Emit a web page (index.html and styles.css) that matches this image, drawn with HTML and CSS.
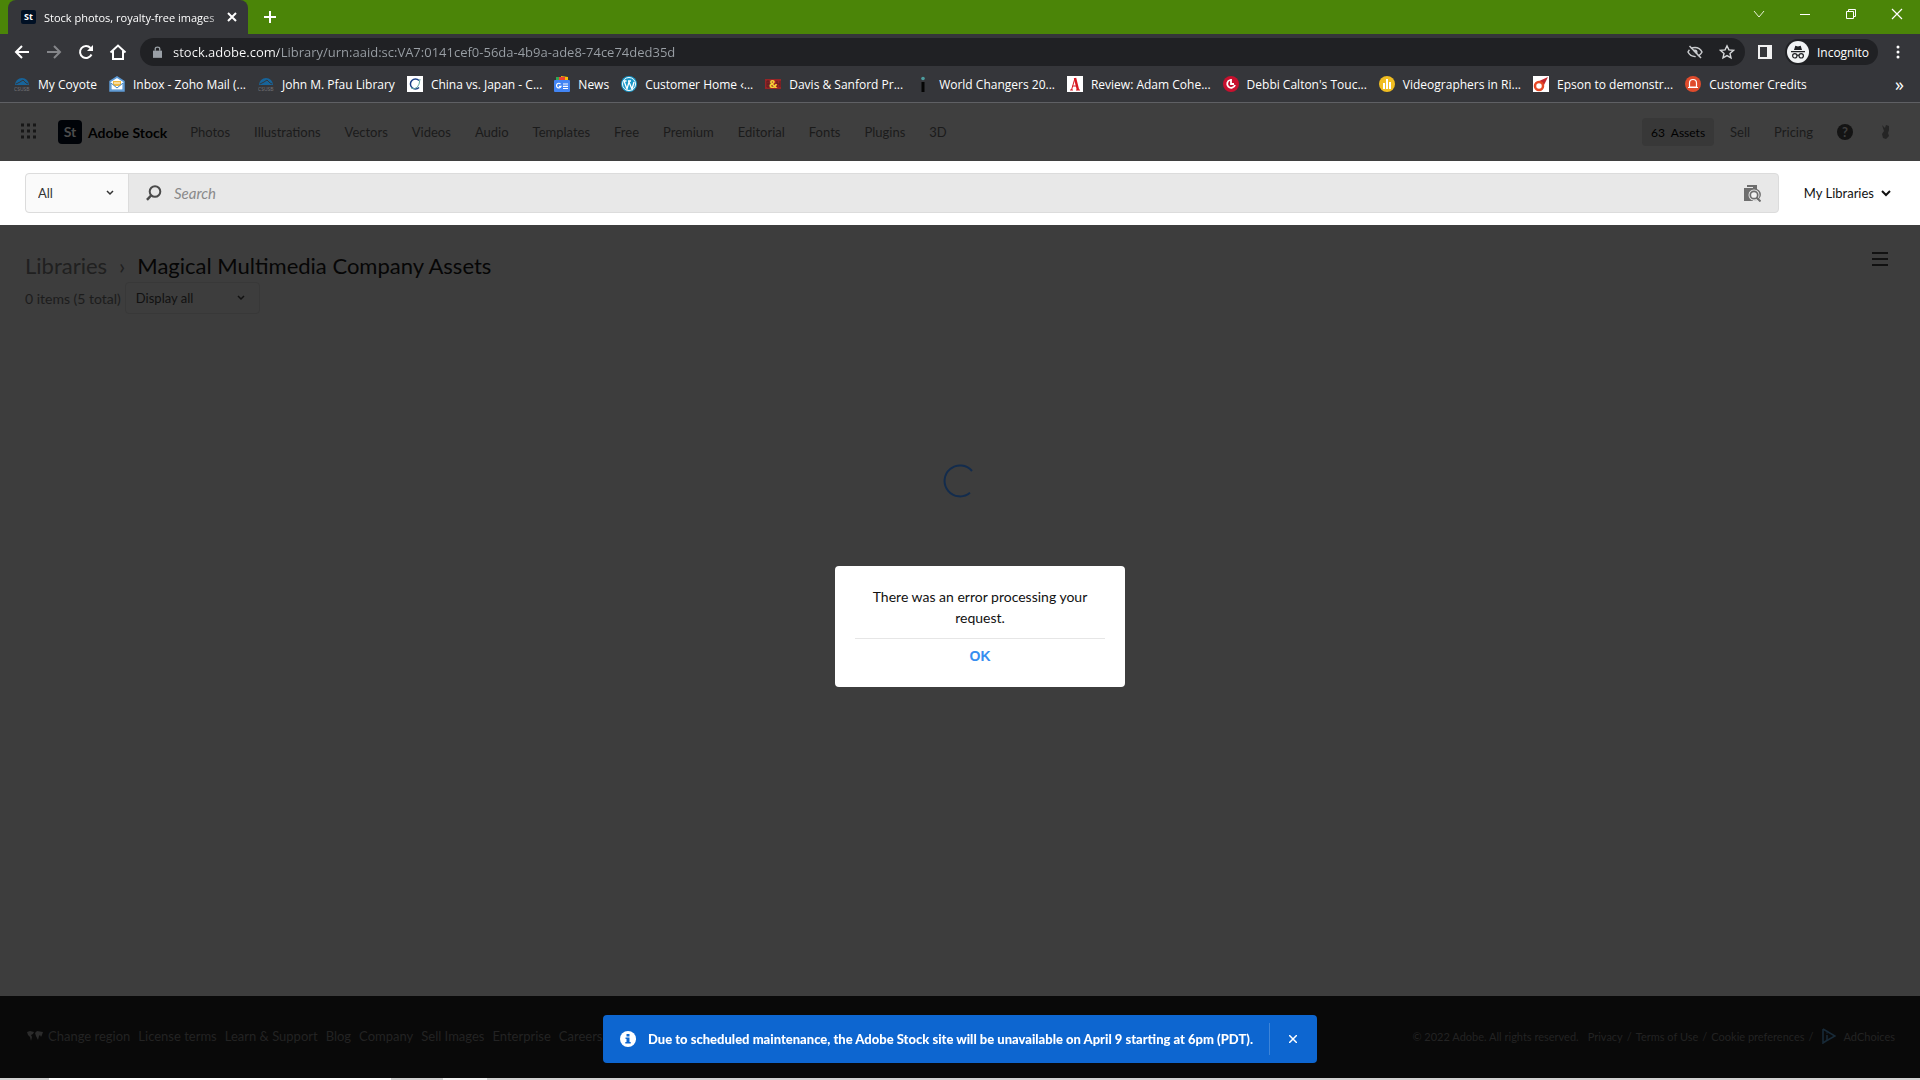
FILE: index.html
```html
<!DOCTYPE html>
<html lang="en">
<head>
  <meta charset="UTF-8">
  <title>Stock photos, royalty-free images</title>
  <link rel="stylesheet" href="styles.css">
</head>
<body>

<div class="browser">
  <div class="tab-strip">
    <div class="tab">
      <span class="favicon-st">St</span>
      <span class="tab-title">Stock photos, royalty-free images</span>
      <button class="tab-close" aria-label="Close tab">
        <svg width="10" height="10" viewBox="0 0 10 10"><path d="M1 1l8 8M9 1l-8 8" stroke="#fff" stroke-width="2"/></svg>
      </button>
    </div>
    <button class="new-tab" aria-label="New tab">
      <svg width="14" height="14" viewBox="0 0 14 14"><path d="M7 1v12M1 7h12" stroke="#fff" stroke-width="2"/></svg>
    </button>
    <div class="window-controls">
      <button aria-label="Search tabs"><svg width="12" height="12" viewBox="0 0 12 12"><path d="M1 3l5 6 5-6" fill="none" stroke="#e8f0d8"/></svg></button>
      <button aria-label="Minimize"><svg width="12" height="12" viewBox="0 0 12 12"><path d="M1 6.500h10" stroke="#fff"/></svg></button>
      <button aria-label="Restore"><svg width="12" height="12" viewBox="0 0 12 12"><path d="M1.500 3.500h7v7h-7zM3.500 3v-1.500h7v7h-2" fill="none" stroke="#fff"/></svg></button>
      <button aria-label="Close"><svg width="12" height="12" viewBox="0 0 12 12"><path d="M1 1l10 10M11 1L1 11" stroke="#fff" stroke-width="1.200"/></svg></button>
    </div>
  </div>

  <div class="toolbar">
    <button class="tool" aria-label="Back"><svg width="16" height="16" viewBox="0 0 16 16"><path d="M15 8H2M8 2L2 8l6 6" fill="none" stroke="#fff" stroke-width="2"/></svg></button>
    <button class="tool" aria-label="Forward"><svg width="16" height="16" viewBox="0 0 16 16"><path d="M1 8h13M8 2l6 6-6 6" fill="none" stroke="#85868a" stroke-width="2"/></svg></button>
    <button class="tool" aria-label="Reload"><svg width="16" height="16" viewBox="0 0 16 16"><path d="M13.500 10.500A6 6 0 1 1 12.500 4" fill="none" stroke="#fff" stroke-width="2"/><path d="M15 1v6H9z" fill="#fff"/></svg></button>
    <button class="tool" aria-label="Home"><svg width="18" height="16" viewBox="0 0 18 16"><path d="M1.500 8.500L9 1.500l7.500 7M4 7v8h10V7" fill="none" stroke="#fff" stroke-width="2"/></svg></button>
    <div class="address">
      <svg class="lock" width="9" height="12" viewBox="0 0 10 13"><path d="M0 5h10v8H0z" fill="#9aa0a6"/><path d="M2.500 5V3a2.500 2 0 0 1 5 0v2" fill="none" stroke="#9aa0a6" stroke-width="1.500"/></svg>
      <input class="url" type="text" aria-label="Address" value="stock.adobe.com/Library/urn:aaid:sc:VA7:0141cef0-56da-4b9a-ade8-74ce74ded35d">
      <button aria-label="Cookies blocked"><svg width="16" height="16" viewBox="0 0 16 16"><path d="M1 8c3-6 11-6 14 0-3 6-11 6-14 0z" fill="none" stroke="#c9cbce" stroke-width="1.500"/><circle cx="8" cy="8" r="2.500" fill="#c9cbce"/><path d="M1.500 3.200L12.500 15" stroke="#202124" stroke-width="2"/><path d="M2.500 2L14 14" stroke="#c9cbce" stroke-width="1.500"/></svg></button>
      <button aria-label="Bookmark this tab"><svg width="16" height="16" viewBox="0 0 16 16"><path d="M8 1.800l1.900 4.100 4.500.5-3.400 3 1 4.500L8 11.600l-4 2.300 1-4.500-3.400-3 4.500-.5z" fill="none" stroke="#d6d8da" stroke-width="1.400"/></svg></button>
    </div>
    <button class="side-panel" aria-label="Side panel"><svg width="14" height="14" viewBox="0 0 14 14"><path d="M1 1h12v12H1z" fill="none" stroke="#f1f1f1" stroke-width="2"/><path d="M9 0h5v14H9z" fill="#f1f1f1"/></svg></button>
    <button class="incognito">
      <svg width="22" height="22" viewBox="0 0 22 22"><circle cx="11" cy="11" r="11" fill="#f1f3f4"/><path d="M7 9l1.300-4.200 2.700.6 2.700-.6L15 9zM4 10h14v1.300H4z" fill="#202124"/><g fill="none" stroke="#202124" stroke-width="1.200"><circle cx="7.800" cy="14.800" r="2.200"/><circle cx="14.200" cy="14.800" r="2.200"/><path d="M10 14.500q1-.8 2 0"/></g></svg>
      Incognito
    </button>
    <button class="menu" aria-label="Browser menu"><svg width="4" height="16" viewBox="0 0 4 16"><g fill="#fff"><circle cx="2" cy="3" r="1.500"/><circle cx="2" cy="8" r="1.500"/><circle cx="2" cy="13" r="1.500"/></g></svg></button>
  </div>

  <nav class="bookmarks" aria-label="Bookmarks">
    <a href="#"><svg width="16" height="16" viewBox="0 0 16 16"><path d="M1 9a7 7 0 0 1 14 0z" fill="#17649a"/><path d="M2 8l4-2 3-2 3 3 2 1" fill="none" stroke="#35363a"/><text x="0" y="15" class="csusb">CSUSB</text></svg>My Coyote</a>
    <a href="#"><svg width="16" height="16" viewBox="0 0 16 16"><path d="M1 5.500L8 1l7 4.500V15H1z" fill="#fff" stroke="#5c9ad6" stroke-width="1.500"/><path d="M4 5h8v5H4z" fill="#f1b83f"/><path d="M2 7l6 5 6-5v7H2z" fill="#fff" stroke="#4285c5"/><path d="M5 7h6" stroke="#fff"/></svg>Inbox - Zoho Mail (...</a>
    <a href="#"><svg width="16" height="16" viewBox="0 0 16 16"><path d="M1 9a7 7 0 0 1 14 0z" fill="#17649a"/><path d="M2 8l4-2 3-2 3 3 2 1" fill="none" stroke="#35363a"/><text x="0" y="15" class="csusb">CSUSB</text></svg>John M. Pfau Library</a>
    <a href="#"><svg width="16" height="16" viewBox="0 0 16 16"><path d="M0 0h16v16H0z" fill="#fff"/><path d="M12 11.500A5 5 0 1 1 12 4.500" fill="none" stroke="#1c3f86" stroke-width="1.500"/><path d="M4 12q8 3 9-9" fill="none" stroke="#63a6a0"/></svg>China vs. Japan - C...</a>
    <a href="#"><svg width="16" height="16" viewBox="0 0 16 16"><path d="M2 1h7v5H2z" fill="#32a853"/><path d="M7 0l7 1v5H7z" fill="#fbbc05"/><path d="M5 1h6v3H5z" fill="#ea4335"/><rect y="4" width="16" height="12" rx="1" fill="#4285f4"/><path d="M6.500 8A2.300 2.300 0 1 0 7 10.300H5M9 8h5M9 10.300h5M9 12.500h5" fill="none" stroke="#fff" stroke-width="1.200"/></svg>News</a>
    <a href="#"><svg width="16" height="16" viewBox="0 0 16 16"><circle cx="8" cy="8" r="8" fill="#1998c9"/><circle cx="8" cy="8" r="6.500" fill="none" stroke="#fff"/><path d="M3 5l3 8 2-7 3 7 2-7M2.500 5h3M7 5h3" fill="none" stroke="#fff" stroke-width="1.300"/></svg>Customer Home ‹...</a>
    <a href="#"><svg width="16" height="16" viewBox="0 0 16 16"><path d="M0 3h16v10H0z" fill="#982426"/><path d="M2 5v6M2 5h2v6H2M2 8h2M12 5v6M15 5v6M12 8h3" fill="none" stroke="#5b1d20"/><text x="4" y="12" class="bh">&amp;</text></svg>Davis &amp; Sanford Pr...</a>
    <a href="#"><svg width="16" height="16" viewBox="0 0 16 16"><circle cx="8" cy="2.500" r="1.800" fill="#4d9c9e"/><path d="M6.500 6h3v10h-3z" fill="#050505"/></svg>World Changers 20...</a>
    <a href="#"><svg width="16" height="16" viewBox="0 0 16 16"><path d="M0 0h16v16H0z" fill="#fff"/><path d="M4.500 14L8 2" fill="none" stroke="#d71920"/><path d="M8 2l3 12" fill="none" stroke="#d71920" stroke-width="2.500"/><path d="M5.500 10h4M3 14h3M9 14h4" fill="none" stroke="#d71920"/></svg>Review: Adam Cohe...</a>
    <a href="#"><svg width="16" height="16" viewBox="0 0 16 16"><circle cx="8" cy="8" r="8" fill="#c8102e"/><path d="M7 4a4 4 0 1 0 5 5M8 9V3M8 8h3" fill="none" stroke="#fff" stroke-width="1.800"/></svg>Debbi Calton's Touc...</a>
    <a href="#"><svg width="16" height="16" viewBox="0 0 16 16"><circle cx="8" cy="8" r="8" fill="#f0bd21"/><path d="M5 7v6M8 3v10M11 6v7" stroke="#fff" stroke-width="2"/></svg>Videographers in Ri...</a>
    <a href="#"><svg width="16" height="16" viewBox="0 0 16 16"><path d="M0 0h16v16H0z" fill="#fff"/><path d="M15 1L4 6l6 5z" fill="#c2272d"/><circle cx="6" cy="10" r="4" fill="#fff" stroke="#e54825" stroke-width="2.500"/></svg>Epson to demonstr...</a>
    <a href="#"><svg width="16" height="16" viewBox="0 0 16 16"><circle cx="8" cy="8" r="8" fill="#df4b2c"/><path d="M4.500 11V7a3.500 3.500 0 0 1 7 0v4zM3 11.500h10" fill="none" stroke="#fff" stroke-width="1.200"/></svg>Customer Credits</a>
    <button class="overflow" aria-label="More bookmarks">»</button>
  </nav>
</div>

<header class="site-header">
  <button class="apps" aria-label="Apps"><svg width="16" height="18" viewBox="0 0 16 18"><path d="M0 2h3M6 2h3M12 2h3M0 8h3M6 8h3M12 8h3M0 14h3M6 14h3M12 14h3" stroke="#171717" stroke-width="3"/></svg></button>
  <a class="brand" href="#"><span class="brand-mark">St</span>Adobe Stock</a>
  <nav class="site-nav">
    <a href="#">Photos</a>
    <a href="#">Illustrations</a>
    <a href="#">Vectors</a>
    <a href="#">Videos</a>
    <a href="#">Audio</a>
    <a href="#">Templates</a>
    <a href="#">Free</a>
    <a href="#">Premium</a>
    <a href="#">Editorial</a>
    <a href="#">Fonts</a>
    <a href="#">Plugins</a>
    <a href="#">3D</a>
  </nav>
  <div class="account">
    <button class="assets">63&nbsp; Assets</button>
    <a href="#">Sell</a>
    <a href="#">Pricing</a>
    <button class="help" aria-label="Help">?</button>
    <button class="avatar" aria-label="Account"><svg width="12" height="16" viewBox="0 0 12 16"><path d="M2 1l3 3 1-3 3 1v4l-1 3 1 3-3 3-3-1-1-4 2-3z" fill="#252525"/></svg></button>
  </div>
</header>

<div class="search-row">
  <form class="search-box">
    <div class="select-wrap category">
      <select aria-label="Category"><option>All</option></select>
      <svg width="8" height="6" viewBox="0 0 8 6"><path d="M1 1l3 3 3-3" fill="none" stroke="#333" stroke-width="1.500"/></svg>
    </div>
    <svg class="magnifier" width="16" height="16" viewBox="0 0 16 16"><circle cx="9" cy="6.500" r="5.300" fill="none" stroke="#4b4b4b" stroke-width="2"/><path d="M5.500 10L1 14.800" stroke="#4b4b4b" stroke-width="2.500"/></svg>
    <input class="query" type="text" placeholder="Search" aria-label="Search">
    <button type="button" aria-label="Search by image"><svg width="18" height="18" viewBox="0 0 18 18"><path d="M4 1h10v4a5.500 5.500 0 0 1-4 11v1H1V4h3z" fill="#6e6e6e"/><path d="M1 3.500h9" stroke="#e8e8e8"/><circle cx="11" cy="11" r="5.500" fill="#e8e8e8"/><circle cx="11" cy="11" r="3.700" fill="#f2f2f2" stroke="#6e6e6e" stroke-width="1.700"/><path d="M13.500 13.500l4 4" stroke="#6e6e6e" stroke-width="2"/></svg></button>
  </form>
  <button class="libraries-menu">My Libraries<svg width="10" height="8" viewBox="0 0 10 8"><path d="M1 2l4 4 4-4" fill="none" stroke="#111" stroke-width="2"/></svg></button>
</div>

<main class="library">
  <div class="library-head">
    <h1><a href="#">Libraries</a><span class="crumb">›</span>Magical Multimedia Company Assets</h1>
    <button class="view-options" aria-label="View options"><svg width="16" height="16" viewBox="0 0 16 16"><path d="M0 2h16M0 8h16M0 14h16" stroke="#111" stroke-width="2"/></svg></button>
  </div>
  <div class="filter-row">
    <span>0 items (5 total)</span>
    <div class="select-wrap display">
      <select aria-label="Display"><option>Display all</option></select>
      <svg width="8" height="6" viewBox="0 0 8 6"><path d="M1 1l3 3 3-3" fill="none" stroke="#111" stroke-width="1.500"/></svg>
    </div>
  </div>
  <svg class="spinner" width="34" height="34" viewBox="0 0 34 34"><path d="M29 7A15.500 15.500 0 1 0 27 28.800" fill="none" stroke="#132c4d" stroke-width="2"/></svg>
</main>

<footer class="site-footer">
  <nav class="footer-links">
    <a href="#"><svg width="16" height="10" viewBox="0 0 16 10"><path d="M0 1l3-1 4 1-1 2-2 1 1 2-1 4-1-4-2-2zM8 2l2-2 6 1-1 3-1 2-1-2-1 1-1 4-2-4z" fill="#2b2b2b"/></svg>Change region</a>
    <a href="#">License terms</a>
    <a href="#">Learn &amp; Support</a>
    <a href="#">Blog</a>
    <a href="#">Company</a>
    <a href="#">Sell Images</a>
    <a href="#">Enterprise</a>
    <a href="#">Careers</a>
  </nav>
  <div class="legal">
    <span class="copyright">© 2022 Adobe. All rights reserved.</span>
    <a href="#">Privacy</a><span>/</span>
    <a href="#">Terms of Use</a><span>/</span>
    <a href="#">Cookie preferences</a><span>/</span>
    <a class="ad-choices" href="#"><svg width="14" height="16" viewBox="0 0 14 16"><path d="M1 1l12 7-9 5M1 1v14l3-2" fill="none" stroke="#182a38" stroke-width="1.600"/><path d="M5 7v5M5 4.500v1" stroke="#182a38" stroke-width="1.500"/></svg>AdChoices</a>
  </div>
</footer>
<div class="desktop-edge"><span class="window-edge"></span><span class="taskbar-edge"></span></div>

<div class="dialog" role="alertdialog" aria-labelledby="dialog-text">
  <p id="dialog-text">There was an error processing your request.</p>
  <button>OK</button>
</div>

<div class="toast" role="status">
  <svg width="16" height="16" viewBox="0 0 16 16"><circle cx="8" cy="8" r="8" fill="#fff"/><path d="M6.500 3h3v2.500h-3zM5.500 6.500h4V11h1.200v1.500H5.300V11h1.200V8h-1z" fill="#0d66d0"/></svg>
  <strong>Due to scheduled maintenance, the Adobe Stock site will be unavailable on April 9 starting at 6pm (PDT).</strong>
  <button aria-label="Dismiss"><svg width="8" height="8" viewBox="0 0 8 8"><path d="M0 0l8 8M8 0L0 8" stroke="#fff" stroke-width="1.500"/></svg></button>
</div>

</body>
</html>
```
FILE: styles.css
```css
* {
  box-sizing: border-box;
}
body {
  display: flex;
  flex-direction: column;
  min-height: 100vh;
  margin: 0;
  font-family: Lato, sans-serif;
  font-size: 13px;
  background-color: #3d3d3d;
}
a {
  color: inherit;
  text-decoration: none;
}
button {
  display: flex;
  align-items: center;
  justify-content: center;
  padding: 0;
  border: none;
  background: none;
  color: inherit;
  font: inherit;
  cursor: pointer;
}
input, select {
  border: none;
  outline: none;
  background: none;
  font: inherit;
}
svg {
  flex: none;
}

/* Browser window */
.browser {
  background-color: #35363a;
  border-bottom: 1px solid #5f6064;
  color: #fff;
  font-family: "Open Sans", sans-serif;
  font-size: 12px;
}
.tab-strip {
  display: flex;
  height: 34px;
  padding-left: 8px;
  background-color: #4b8508;
}
.tab {
  display: flex;
  align-items: center;
  width: 240px;
  padding: 0 11px 0 13px;
  border-radius: 8px 8px 0 0;
  background-color: #35363a;
}
.favicon-st {
  width: 15px;
  margin-right: 8px;
  border-radius: 2px;
  background-color: #001024;
  font-size: 9px;
  font-weight: bold;
  line-height: 14px;
  text-align: center;
}
.tab-title {
  flex: 1;
  font-size: 11px;
  white-space: nowrap;
  -webkit-mask-image: linear-gradient(to right, #000 88%, transparent);
  mask-image: linear-gradient(to right, #000 88%, transparent);
}
.new-tab {
  width: 44px;
}
.window-controls {
  display: flex;
  margin-left: auto;
}
.window-controls button {
  width: 46px;
  height: 28px;
}
.toolbar {
  display: flex;
  align-items: center;
  height: 36px;
  padding: 0 12px 0 6px;
}
.tool {
  width: 32px;
  height: 28px;
}
.address {
  display: flex;
  flex: 1;
  align-items: center;
  gap: 16px;
  height: 28px;
  margin-left: 6px;
  padding: 0 10px 0 13px;
  border-radius: 14px;
  background-color: #202124;
}
.lock {
  margin-right: -5px;
}
.url {
  flex: 1;
  padding: 0;
  font-size: 13px;
  /* host is white, path is grey */
  background-image: linear-gradient(to right, #fff 106px, #9aa0a6 106px);
  -webkit-background-clip: text;
  background-clip: text;
  color: transparent;
}
.side-panel {
  width: 40px;
}
.incognito {
  gap: 8px;
  height: 26px;
  padding: 0 9px 0 2px;
  border-radius: 13px;
  background-color: #202124;
}
.menu {
  width: 20px;
  margin-left: 10px;
}
.bookmarks {
  display: flex;
  align-items: center;
  gap: 12px;
  height: 32px;
  padding: 0 16px 4px 14px;
  white-space: nowrap;
}
.bookmarks a {
  display: flex;
  align-items: center;
  gap: 8px;
}
.csusb {
  fill: #76777a;
  font-size: 5px;
}
.bh {
  fill: #f7d038;
  font-size: 11px;
  font-weight: bold;
}
.overflow {
  height: 24px;
  margin-left: auto;
  font-size: 18px;
}

/* Site header */
.site-header {
  display: flex;
  align-items: center;
  height: 58px;
  padding: 0 28px 0 21px;
  background-color: #3f3f3f;
  color: #1b1b1b;
}
.brand {
  display: flex;
  align-items: center;
  gap: 6px;
  margin: 0 23px 0 21px;
  color: #000;
  font-size: 14px;
  font-weight: bold;
}
.brand-mark {
  width: 24px;
  border-radius: 4px;
  background-color: #000308;
  color: #4c4c4c;
  line-height: 24px;
  text-align: center;
}
.site-nav {
  display: flex;
  gap: 24px;
}
.account {
  display: flex;
  align-items: center;
  gap: 24px;
  margin-left: auto;
}
.assets {
  height: 28px;
  margin-right: -8px;
  padding: 0 9px;
  border-radius: 4px;
  background-color: #383838;
  color: #000;
  font-size: 12px;
}
.help {
  width: 16px;
  height: 16px;
  border-radius: 8px;
  background-color: #141414;
  color: #3f3f3f;
  font-weight: bold;
}
.avatar {
  margin-left: 3px;
}

/* Search */
.search-row {
  display: flex;
  align-items: center;
  gap: 25px;
  height: 64px;
  padding: 0 29px 0 25px;
  background-color: #fff;
}
.search-box {
  display: flex;
  flex: 1;
  align-items: center;
  height: 40px;
  padding-right: 17px;
  border: 1px solid #dcdcdc;
  border-radius: 4px;
  background-color: #e8e8e8;
}
.select-wrap {
  position: relative;
}
.select-wrap select {
  width: 100%;
  height: 100%;
  padding: 0 12px;
  appearance: none;
}
.select-wrap svg {
  position: absolute;
  top: calc(50% - 3px);
  right: 14px;
  pointer-events: none;
}
.category {
  width: 103px;
  height: 38px;
  border-right: 1px solid #dcdcdc;
  border-radius: 4px 0 0 4px;
  background-color: #fafafa;
}
.category select {
  color: #333;
}
.magnifier {
  margin: 0 12px 0 17px;
}
.query {
  flex: 1;
  padding: 0;
  font-size: 15px;
}
.query::placeholder {
  color: #8a8a8a;
  font-style: italic;
}
.libraries-menu {
  gap: 7px;
  color: #111;
}

/* Library */
.library {
  flex: 1;
  padding: 25px 25px 0;
  background-color: #3d3d3d;
}
.library-head {
  display: flex;
  align-items: flex-start;
  justify-content: space-between;
}
h1 {
  margin: 0;
  color: #060606;
  font-size: 22px;
  font-weight: normal;
  line-height: 32px;
}
h1 a, .crumb {
  color: #202020;
}
.crumb {
  margin: 0 12px;
}
.view-options {
  margin: 1px 7px 0 0;
}
.filter-row {
  display: flex;
  align-items: center;
  gap: 4px;
  color: #1c1c1c;
  font-size: 14px;
}
.display {
  width: 135px;
  height: 32px;
  border: 1px solid #383838;
  border-radius: 4px;
}
.display select {
  padding: 0 10px;
  color: #111;
  font-size: 13px;
}
.spinner {
  display: block;
  margin: 150px auto 0;
}

/* Footer */
.site-footer {
  display: flex;
  align-items: center;
  justify-content: space-between;
  height: 82px;
  padding: 0 25px 2px 27px;
  background-color: #090909;
  color: #232323;
}
.footer-links {
  display: flex;
  gap: 8px;
}
.footer-links a {
  display: flex;
  align-items: center;
  gap: 5px;
}
.legal {
  display: flex;
  align-items: center;
  gap: 4px;
  font-size: 11px;
}
.copyright {
  margin-right: 5px;
}
.ad-choices {
  display: flex;
  align-items: center;
  gap: 8px;
  margin-left: 4px;
}
.desktop-edge {
  display: flex;
  gap: 52px;
  height: 2px;
  padding-left: 49px;
  background-color: #d2d2d2;
}
.window-edge {
  width: 342px;
  background-color: #fff;
}
.taskbar-edge {
  width: 44px;
  background-color: #f4f4f4;
}

/* Error dialog */
.dialog {
  position: fixed;
  top: 566px;
  left: calc(50% - 125px);
  width: 290px;
  padding: 20px;
  border-radius: 4px;
  background-color: #fff;
  color: #111;
  font-size: 14px;
  line-height: 21px;
  text-align: center;
}
.dialog p {
  margin: 0;
  padding: 0 10px 10px;
  border-bottom: 1px solid #e6e6e6;
}
.dialog button {
  width: 100%;
  padding-top: 7px;
  color: #378ef0;
  font-family: "Liberation Sans", sans-serif;
  font-weight: bold;
}

/* Maintenance notice */
.toast {
  position: fixed;
  bottom: 17px;
  left: 50%;
  display: flex;
  align-items: center;
  height: 48px;
  padding-left: 17px;
  border-radius: 4px;
  background-color: #0d66d0;
  color: #fff;
  white-space: nowrap;
  transform: translateX(-50%);
}
.toast strong {
  margin: 0 16px 0 12px;
  font-weight: 900;
}
.toast button {
  width: 48px;
  height: 32px;
  border-left: 1px solid #3d85d9;
}
```
